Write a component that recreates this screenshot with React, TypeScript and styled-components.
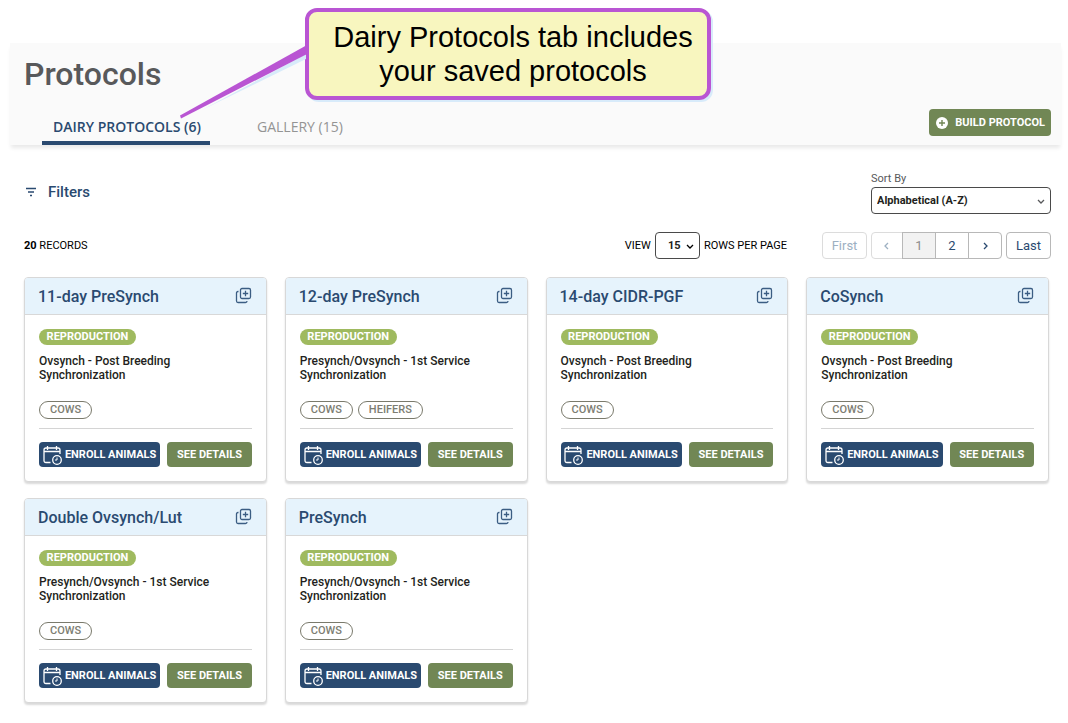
import React from "react";
import styled, { createGlobalStyle } from "styled-components";

const GlobalStyle = createGlobalStyle`
  *, *::before, *::after { box-sizing: border-box; }
  body {
    margin: 0;
    background: #fff;
    color: #231f20;
    font-family: Roboto, "Noto Sans", sans-serif;
  }
  button, select, input { font-family: inherit; }
  h1, h2, p { margin: 0; }
`;

const navy = "#2a4a70";
const olive = "#718755";

const Page = styled.div`
  position: relative;
  padding: 43px 7px 18px 10px;
`;

const Header = styled.header`
  display: flex;
  justify-content: space-between;
  align-items: flex-end;
  height: 102px;
  padding: 0 10px 0 14px;
  background: #fafafa;
  box-shadow: 0 4px 4px -1px rgba(0, 0, 0, 0.09);
`;

const Title = styled.h1`
  font-size: 32px;
  line-height: 40px;
  font-weight: 500;
  color: #58595b;
`;

const Tabs = styled.nav`
  display: flex;
  gap: 14px;
  padding: 22px 0 0 18px;
`;

const Tab = styled.a<{ $active?: boolean }>`
  height: 29px;
  min-width: 168px;
  padding: 0 9px 0 ${(p) => (p.$active ? 11 : 33)}px;
  border-bottom: 4px solid ${(p) => (p.$active ? navy : "transparent")};
  border-radius: 2px 2px 0 0;
  font: ${(p) => (p.$active ? 600 : 500)} 14px/22px "Open Sans", "Noto Sans", sans-serif;
  color: ${(p) => (p.$active ? navy : "#949494")};
  text-decoration: none;
  white-space: nowrap;
`;

const BuildButton = styled.button`
  display: flex;
  align-items: center;
  justify-content: space-between;
  width: 122px;
  height: 27px;
  margin-bottom: 9px;
  padding: 0 6px 0 7px;
  border: 0;
  border-radius: 4px;
  background: ${olive};
  color: #fff;
  font-size: 11px;
  font-weight: 700;
  white-space: nowrap;
`;

const Main = styled.main`
  padding: 0 10px 0 14px;
`;

const FilterBar = styled.div`
  display: flex;
  justify-content: space-between;
  align-items: flex-start;
  padding-top: 26px;
`;

const FilterButton = styled.button`
  display: flex;
  align-items: center;
  gap: 10px;
  margin-top: 10px;
  padding: 0;
  border: 0;
  background: none;
  color: ${navy};
  font-size: 15px;
  line-height: 22px;
  font-weight: 500;
`;

const SortField = styled.label`
  display: flex;
  flex-direction: column;
  width: 180px;
  font-size: 11px;
  line-height: 16px;
  color: #58595b;
`;

const SelectBox = styled.span<{ $width: number; $inset: number }>`
  display: inline-grid;
  align-items: center;
  width: ${(p) => p.$width}px;

  select, svg { grid-area: 1 / 1; }
  select {
    appearance: none;
    width: 100%;
    height: 27px;
    padding: 0 ${(p) => p.$inset}px;
    border: 1px solid #4a4a4a;
    border-radius: 4px;
    background: #fff;
    color: #231f20;
    font-size: 11px;
    font-weight: 700;
  }
  svg {
    justify-self: end;
    margin-right: 6px;
    pointer-events: none;
  }
`;

const RecordsBar = styled.div`
  display: flex;
  align-items: center;
  margin-top: 18px;
  font-size: 11px;
  color: #000;
`;

const Records = styled.p`
  flex: 1;
`;

const RowsField = styled.label`
  display: flex;
  align-items: center;
  gap: 4px;
  margin-right: 35px;
`;

const Pager = styled.nav`
  display: flex;
  gap: 4px;
`;

const PageGroup = styled.div`
  display: flex;

  button { border-radius: 0; margin-left: -1px; width: 34px; }
  button:first-child { border-radius: 4px 0 0 4px; margin-left: 0; width: 32px; }
  button:last-child { border-radius: 0 4px 4px 0; }
`;

const PageButton = styled.button<{ $current?: boolean }>`
  display: flex;
  align-items: center;
  justify-content: center;
  width: 45px;
  height: 27px;
  padding: 0;
  border: 1px solid #b8b8b8;
  border-radius: 4px;
  background: ${(p) => (p.$current ? "#f2f2f2" : "#fff")};
  color: ${(p) => (p.$current ? "#8c8c8c" : navy)};
  font-size: 13px;

  &:disabled { color: #9db0c2; border-color: #dcdcdc; }
`;

const Grid = styled.section`
  display: grid;
  grid-template-columns: repeat(4, 1fr);
  gap: 16px 18px;
  margin: 18px 2px 0 0;
`;

const Card = styled.article`
  height: 205px;
  border: 1px solid #d8d8d8;
  border-radius: 4px;
  background: #fff;
  box-shadow: 0 2px 2px rgba(0, 0, 0, 0.15);
  overflow: hidden;
`;

const CardHead = styled.div`
  display: flex;
  align-items: center;
  justify-content: space-between;
  height: 37px;
  padding: 0 14px 0 13px;
  border-bottom: 1px solid #d8d8d8;
  background: #e6f3fc;
  color: ${navy};
`;

const CardTitle = styled.h2`
  padding-top: 2px;
  font-size: 16px;
  line-height: 20px;
  font-weight: 500;
`;

const CopyButton = styled.button`
  display: flex;
  padding: 0 0 2px;
  border: 0;
  background: none;
  color: #3b5d83;
`;

const CardBody = styled.div`
  padding: 14px 14px 0;
`;

const Category = styled.span`
  display: flex;
  align-items: center;
  justify-content: center;
  width: 97px;
  height: 16px;
  border-radius: 8px;
  background: #9fba5f;
  color: #fff;
  font-size: 11px;
  line-height: 14px;
  font-weight: 700;
`;

const Description = styled.p`
  width: 180px;
  margin-top: 9px;
  font-size: 12px;
  line-height: 14px;
  font-weight: 500;
`;

const Tags = styled.div`
  display: flex;
  gap: 5px;
  margin-top: 19px;
  padding-bottom: 9px;
  border-bottom: 1px solid #d4d4d4;
`;

const Tag = styled.span`
  height: 18px;
  padding: 0 10px;
  border: 1px solid #7a7a6c;
  border-radius: 9px;
  color: #7d7d72;
  font-size: 11px;
  line-height: 15px;
  font-weight: 500;
`;

const Actions = styled.div`
  display: flex;
  gap: 7px;
  margin-top: 13px;
`;

const ActionButton = styled.button<{ $primary?: boolean }>`
  display: flex;
  align-items: center;
  justify-content: center;
  gap: 3px;
  flex: ${(p) => (p.$primary ? "122 1 0" : "85 1 0")};
  height: 25px;
  padding: 0;
  border: 0;
  border-radius: 4px;
  background: ${(p) => (p.$primary ? navy : olive)};
  color: #fff;
  font-size: 11px;
  font-weight: 700;
  white-space: nowrap;
`;

const Callout = styled.aside`
  position: absolute;
  top: 8px;
  left: 305px;
  width: 406px;
  padding: 8px 0 8px 10px;
  border: 4px solid #b955d3;
  border-radius: 12px;
  background: #f8f6bf;
  box-shadow: 2px 2px 0 #d8ebfa;
  color: #000;
  font: 29px/34px "Liberation Sans", Arial, sans-serif;
  text-align: center;
`;

const Pointer = styled.svg`
  position: absolute;
  top: 42px;
  left: 178px;
  pointer-events: none;
`;

const Chevron = ({ d = "M1 3l3 3 3-3" }: { d?: string }) => (
  <svg width="8" height="8" viewBox="0 0 8 8" fill="none" stroke="currentColor" strokeWidth="1.3" aria-hidden="true">
    <path d={d} />
  </svg>
);

const CopyIcon = () => (
  <svg width="17" height="17" viewBox="0 0 17 17" fill="none" stroke="currentColor" strokeWidth="1.3" aria-hidden="true">
    <rect x="5.5" y="1.5" width="10" height="10" rx="1.5" />
    <path d="M10.500 3.800v5.400M7.800 6.500h5.400M3.500 4.500H3Q1.500 4.500 1.500 6v8q0 1.500 1.500 1.500h7.500q1.500 0 1.500-1.500" />
  </svg>
);

const CalendarIcon = () => (
  <svg width="19" height="20" viewBox="0 0 19 20" fill="none" stroke="#fff" strokeWidth="1.3" aria-hidden="true">
    <path d="M7.500 17.500H3q-2 0-2-2V5q0-2 2-2h12q2 0 2 2v4M1 6.500h16M4.500 1v4M13.500 1v4" />
    <circle cx="14" cy="15" r="4.300" />
    <path d="M14 12.500V15h-2" strokeWidth="1" />
  </svg>
);

const cards = [
  { title: "11-day PreSynch", text: "Ovsynch - Post Breeding Synchronization", tags: ["COWS"] },
  { title: "12-day PreSynch", text: "Presynch/Ovsynch - 1st Service Synchronization", tags: ["COWS", "HEIFERS"] },
  { title: "14-day CIDR-PGF", text: "Ovsynch - Post Breeding Synchronization", tags: ["COWS"] },
  { title: "CoSynch", text: "Ovsynch - Post Breeding Synchronization", tags: ["COWS"] },
  { title: "Double Ovsynch/Lut", text: "Presynch/Ovsynch - 1st Service Synchronization", tags: ["COWS"] },
  { title: "PreSynch", text: "Presynch/Ovsynch - 1st Service Synchronization", tags: ["COWS"] },
];

export default function App() {
  return (
    <Page>
      <GlobalStyle />
      <Header>
        <div>
          <Title>Protocols</Title>
          <Tabs>
            <Tab href="#dairy" $active>DAIRY PROTOCOLS (6)</Tab>
            <Tab href="#gallery">GALLERY (15)</Tab>
          </Tabs>
        </div>
        <BuildButton type="button">
          <svg width="12" height="12" viewBox="0 0 12 12" aria-hidden="true">
            <circle cx="6" cy="6" r="6" fill="#fff" />
            <path d="M6 3v6M3 6h6" stroke={olive} strokeWidth="1.4" />
          </svg>
          BUILD PROTOCOL
        </BuildButton>
      </Header>
      <Main>
        <FilterBar>
          <FilterButton type="button">
            <svg width="14" height="10" viewBox="0 0 14 10" stroke="currentColor" strokeWidth="1.3" aria-hidden="true">
              <path d="M2 1.500h10M4 5h6M6 8.500h2" />
            </svg>
            Filters
          </FilterButton>
          <SortField>
            Sort By
            <SelectBox $width={180} $inset={5}>
              <select defaultValue="az"><option value="az">Alphabetical (A-Z)</option></select>
              <Chevron />
            </SelectBox>
          </SortField>
        </FilterBar>
        <RecordsBar>
          <Records><b>20</b> RECORDS</Records>
          <RowsField>
            VIEW
            <SelectBox $width={45} $inset={12}>
              <select defaultValue="15"><option>15</option></select>
              <Chevron />
            </SelectBox>
            ROWS PER PAGE
          </RowsField>
          <Pager aria-label="Pagination">
            <PageButton type="button" disabled>First</PageButton>
            <PageGroup>
              <PageButton type="button" disabled aria-label="Previous page"><Chevron d="M5 1L2 4l3 3" /></PageButton>
              <PageButton type="button" $current>1</PageButton>
              <PageButton type="button">2</PageButton>
              <PageButton type="button" aria-label="Next page"><Chevron d="M3 1l3 3-3 3" /></PageButton>
            </PageGroup>
            <PageButton type="button">Last</PageButton>
          </Pager>
        </RecordsBar>
        <Grid>
          {cards.map((c) => (
            <Card key={c.title}>
              <CardHead>
                <CardTitle>{c.title}</CardTitle>
                <CopyButton type="button" aria-label={`Copy ${c.title}`}><CopyIcon /></CopyButton>
              </CardHead>
              <CardBody>
                <Category>REPRODUCTION</Category>
                <Description>{c.text}</Description>
                <Tags>{c.tags.map((t) => <Tag key={t}>{t}</Tag>)}</Tags>
                <Actions>
                  <ActionButton type="button" $primary><CalendarIcon />ENROLL ANIMALS</ActionButton>
                  <ActionButton type="button">SEE DETAILS</ActionButton>
                </Actions>
              </CardBody>
            </Card>
          ))}
        </Grid>
      </Main>
      <Callout>Dairy Protocols tab includes<br />your saved protocols</Callout>
      <Pointer width="131" height="78" viewBox="0 0 131 78" aria-hidden="true">
        <path d="M24 68L128 17v-5z" fill="#d8ebfa" />
        <path d="M2 73.500L129 3v9L3 76.500z" fill="#b955d3" />
      </Pointer>
    </Page>
  );
}
